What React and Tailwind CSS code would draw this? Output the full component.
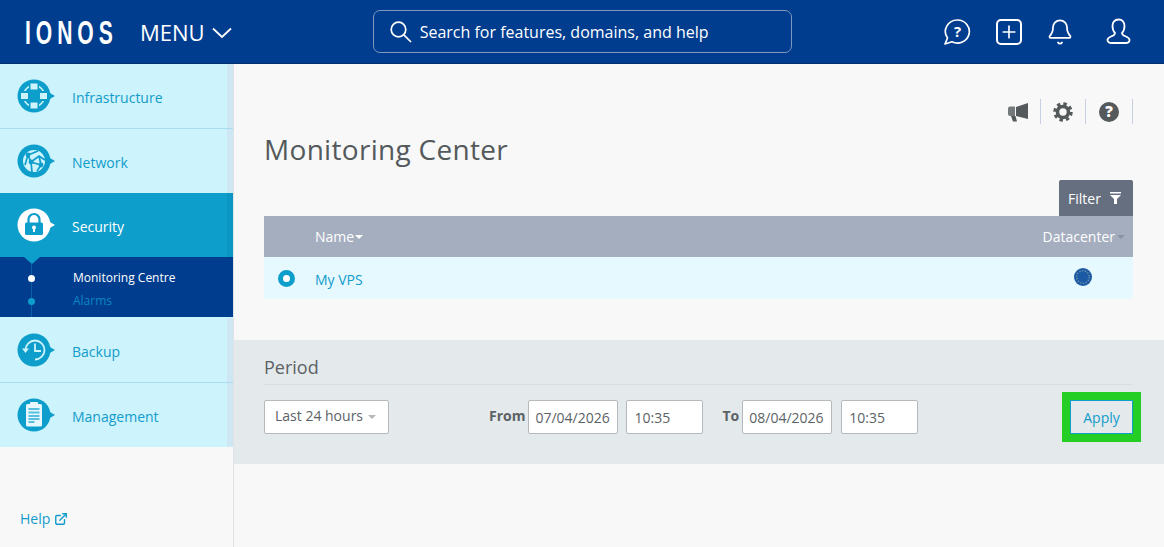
import React from "react";
import { Plus, Bell, ExternalLink } from "lucide-react";

const Bubble = ({ active, children }) => (
  <svg width="38" height="34" viewBox="0 0 38 34" className="shrink-0">
    <circle cx="17" cy="17" r="16.5" fill={active ? "#fff" : "#0d9ecb"} />
    <path d="M32 13.5 L38 17 L32 20.5 Z" fill={active ? "#fff" : "#0d9ecb"} />
    {children}
  </svg>
);

const InfraIcon = () => (
  <Bubble>
    <circle cx="17" cy="17" r="10.5" fill="none" stroke="#cdf3fc" strokeWidth="1.5" />
    <rect x="12" y="3.5" width="10" height="8" fill="#0d9ecb" />
    <rect x="12" y="22.5" width="10" height="8" fill="#0d9ecb" />
    <rect x="3.500" y="12" width="8" height="10" fill="#0d9ecb" />
    <rect x="22.500" y="12" width="8" height="10" fill="#0d9ecb" />
    <rect x="13.500" y="4.500" width="7" height="6" fill="#cdf3fc" />
    <rect x="13.500" y="23.500" width="7" height="6" fill="#cdf3fc" />
    <rect x="4" y="14" width="7" height="6" fill="#cdf3fc" />
    <rect x="23" y="14" width="7" height="6" fill="#cdf3fc" />
  </Bubble>
);

const NetworkIcon = () => (
  <Bubble>
    <circle cx="17" cy="17" r="11" fill="#cdf3fc" />
    <path d="M11 11 L14 18 L24 21 M14 18 L15 28 M11 11 L8 21 M11 11 L21 7 M14 18 L22 12 L28 16 M22 12 L24 21 L20 27" fill="none" stroke="#0d9ecb" strokeWidth="1.700" />
    <circle cx="11" cy="11" r="2.400" fill="#0d9ecb" />
    <circle cx="14" cy="18" r="2.400" fill="#0d9ecb" />
    <circle cx="24" cy="21" r="2.400" fill="#0d9ecb" />
  </Bubble>
);

const LockIcon = () => (
  <Bubble active>
    <path d="M11.500 15 V11.500 a5.500 5.500 0 0 1 11 0 V15" fill="none" stroke="#0d9ecb" strokeWidth="2.200" />
    <rect x="8" y="14.500" width="18" height="12.500" rx="1.500" fill="#0d9ecb" />
    <circle cx="17" cy="19.500" r="2" fill="#fff" />
    <rect x="16" y="20" width="2" height="4" fill="#fff" />
  </Bubble>
);

const BackupIcon = () => (
  <Bubble>
    <path d="M8.500 17 a9.500 9.500 0 1 1 9.500 9.500" fill="none" stroke="#cdf3fc" strokeWidth="1.800" />
    <path d="M5 15.500 h7 l-3.500 4.500 Z" fill="#cdf3fc" />
    <path d="M18 10.500 V18 H24" fill="none" stroke="#cdf3fc" strokeWidth="1.800" />
  </Bubble>
);

const ClipIcon = () => (
  <Bubble>
    <rect x="9" y="6" width="16" height="22.500" rx="1.500" fill="#e6f8fd" />
    <rect x="13" y="4" width="8" height="3.500" rx="1" fill="#e6f8fd" />
    <path d="M11.500 11 h11 M11.500 14.500 h11 M11.500 18 h11 M11.500 21 h11 M11.500 24 h6" stroke="#59bfdf" strokeWidth="1.800" />
  </Bubble>
);

const NavItem = ({ icon, label, border = true }) => (
  <div className={`relative bg-[#cdf3fc] flex items-center pl-[17px] ${border ? "h-[65px] border-b border-[#a9dcf3]" : "h-[64px]"}`}>
    <div className="absolute right-0 top-0 bottom-0 w-[6px] bg-[#cfe7f3]" />
    {icon}
    <span className="ml-[17px] mt-[2px] text-[14px] text-[#129ccb]">{label}</span>
  </div>
);

const Field = ({ children, w }) => (
  <div className={`h-[34px] ${w} bg-white border border-[#b5b9bc] rounded-[2px] flex items-center text-[14px] text-[#5b6266] shrink-0`}>
    {children}
  </div>
);

export default function App() {
  return (
    <div className="h-[547px] w-[1164px] overflow-hidden flex flex-col bg-[#f8f8f8] font-['Open_Sans',sans-serif]">
      <header className="h-[64px] bg-[#003d8f] flex items-center shrink-0 border-b border-[#02306f]">
        <span className="ml-[25px] w-[92px] mt-[1px] text-white text-[34px] leading-none font-bold font-['Liberation_Sans',sans-serif] tracking-[8px] origin-left scale-x-[0.62] whitespace-nowrap">IONOS</span>
        <span className="ml-[23px] text-white text-[22px] leading-none">MENU</span>
        <svg width="20" height="12" viewBox="0 0 20 12" fill="none" stroke="#fff" strokeWidth="1.800" className="ml-[7px] mt-[3px]">
          <path d="M1 1.500 L10 10 L19 1.500" />
        </svg>
        <div className="ml-[141px] w-[419px] h-[43px] rounded-[7px] border border-[#8097bd] flex items-center pl-[16px] text-white">
          <svg width="22" height="22" viewBox="0 0 22 22" fill="none" stroke="#fff" strokeWidth="1.700" className="shrink-0">
            <circle cx="8.500" cy="8.500" r="7.300" />
            <path d="M13.800 13.800 L21 21" />
          </svg>
          <span className="ml-[8px] text-[16px]">Search for features, domains, and help</span>
        </div>
        <div className="ml-[152px] flex items-center text-white">
          <svg width="28" height="28" viewBox="0 0 28 28" fill="none" stroke="#fff" strokeWidth="1.700" className="-ml-[1px]">
            <path d="M14.500 2 a12 11.500 0 1 1 -5.500 21.800 L2 26 L4.500 20 A12 11.500 0 0 1 14.500 2 Z" strokeLinejoin="round" />
            <text x="14.500" y="19" fontSize="15" fontWeight="700" fill="#fff" stroke="none" textAnchor="middle">?</text>
          </svg>
          <div className="ml-[25px] w-[26px] h-[26px] rounded-[5px] border-2 border-white flex items-center justify-center">
            <Plus size={20} strokeWidth={2} />
          </div>
          <Bell className="ml-[24px]" size={28} strokeWidth={1.500} />
          <svg className="ml-[32px]" width="25" height="27" viewBox="0 0 25 27" fill="none" stroke="#fff" strokeWidth="1.800">
            <path d="M12.500 1.500 c4 0 6 3 6 6.500 c0 3 -1 5.500 -2.500 7 c0 2 1 2.500 4 3.500 c2.500 1 3.500 2 3.500 3.500 c0 2 -2 3 -4 3 h-14 c-2 0 -4 -1 -4 -3 c0 -1.500 1 -2.500 3.500 -3.500 c3 -1 4 -1.500 4 -3.500 c-1.500 -1.500 -2.500 -4 -2.500 -7 c0 -3.500 2 -6.500 6 -6.500 Z" strokeLinejoin="round" />
          </svg>
        </div>
      </header>

      <div className="flex flex-1 min-h-0">
        <aside className="w-[234px] shrink-0 border-r border-[#dfe3e6] flex flex-col">
          <NavItem icon={<InfraIcon />} label="Infrastructure" />
          <NavItem icon={<NetworkIcon />} label="Network" border={false} />
          <div className="relative h-[64px] bg-[#0d9ecb] flex items-center pl-[17px]">
            <div className="absolute right-0 top-0 bottom-0 w-[6px] bg-[#0b96c4]" />
            <LockIcon />
            <span className="ml-[17px] mt-[2px] text-[14px] text-white">Security</span>
          </div>
          <div className="relative h-[60px] bg-[#003d8f] pl-[73px] border-b border-[#cdf3fc] box-content">
            <div className="absolute left-[31px] top-0 bottom-0 w-px bg-[#0a5fa5]" />
            <div className="absolute left-[24px] top-0 w-0 h-0 border-l-[8px] border-r-[8px] border-t-[7px] border-l-transparent border-r-transparent border-t-[#0d9ecb]" />
            <div className="absolute left-[28px] top-[18px] w-[7px] h-[7px] rounded-full bg-white" />
            <div className="absolute left-[28px] top-[41px] w-[7px] h-[7px] rounded-full bg-[#0d9ecb]" />
            <div className="pt-[12px] text-[12px] leading-[17px] text-white">Monitoring Centre</div>
            <div className="mt-[6px] text-[12px] leading-[17px] text-[#0b86c4]">Alarms</div>
          </div>
          <NavItem icon={<BackupIcon />} label="Backup" />
          <NavItem icon={<ClipIcon />} label="Management" border={false} />
          <div className="mt-[61px] ml-[20px] flex items-center text-[14px] text-[#129ccb]">
            Help
            <ExternalLink className="ml-[4px]" size={14} strokeWidth={2.400} />
          </div>
        </aside>

        <main className="flex-1 min-w-0">
          <div className="pl-[30px] pr-[31px]">
            <div className="h-[60px] flex justify-end items-start pt-[35px]">
              <div className="flex items-center h-[25px] text-[#54595c]">
                <svg width="22" height="20" viewBox="0 0 22 20" fill="#54595c" className="mr-[11px]">
                  <path d="M21 1 V17 L9 14 V5 Z" />
                  <path d="M1 6.500 a2 2 0 0 1 2 -2 H8 V14 H3 a2 2 0 0 1 -2 -2 Z" fill="#74797c" />
                  <path d="M4 14 H8.500 L10 19.500 H6 Z" />
                </svg>
                <div className="w-px h-[25px] bg-[#c6d0e0]" />
                <svg width="20" height="20" viewBox="0 0 20 20" className="mx-[12px]">
                  <circle cx="10" cy="10" r="5.500" fill="none" stroke="#54595c" strokeWidth="3.600" />
                  <circle cx="10" cy="10" r="8" fill="none" stroke="#54595c" strokeWidth="3.500" strokeDasharray="3.300 3" />
                </svg>
                <div className="w-px h-[25px] bg-[#c6d0e0]" />
                <div className="mx-[13px] w-[20px] h-[20px] rounded-full bg-[#54595c] flex items-center justify-center text-white text-[15px] font-extrabold leading-none">?</div>
                <div className="w-px h-[25px] bg-[#c6d0e0]" />
              </div>
            </div>
            <h1 className="mt-[6px] text-[28px] leading-[38px] text-[#54595c] tracking-[0.3px] font-normal">Monitoring Center</h1>
            <div className="mt-[12px] flex justify-end">
              <div className="w-[74px] h-[36px] bg-[#666f80] rounded-t-[2px] text-white text-[14px] flex items-center pl-[9px]">
                Filter
                <svg width="11" height="12" viewBox="0 0 11 12" className="ml-[9px]" fill="#fff">
                  <rect x="0" y="0" width="11" height="1.500" />
                  <path d="M0 3 H11 L7 7 V12 H4 V7 Z" />
                </svg>
              </div>
            </div>
            <div className="h-[41px] bg-[#a5aebf] flex items-center text-white text-[14px]">
              <span className="ml-[51px]">Name</span>
              <span className="ml-[1px] w-0 h-0 border-l-[4px] border-r-[4px] border-t-[4px] border-l-transparent border-r-transparent border-t-white" />
              <span className="ml-auto">Datacenter</span>
              <span className="ml-[2px] mr-[8px] w-0 h-0 border-l-[4px] border-r-[4px] border-t-[4px] border-l-transparent border-r-transparent border-t-[#8b93a3]" />
            </div>
            <div className="h-[42px] bg-[#e6f9ff] flex items-center">
              <div className="ml-[14px] w-[17px] h-[17px] rounded-full border-[5px] border-[#0d9ecb] bg-white" />
              <span className="ml-[20px] mt-[2px] text-[14px] text-[#129ccb]">My VPS</span>
              <svg width="18" height="18" viewBox="0 0 18 18" className="ml-auto mr-[41px] mb-[2px]">
                <circle cx="9" cy="9" r="9" fill="#1c5aa6" />
                <circle cx="9" cy="9" r="6.300" fill="none" stroke="#6f8fa0" strokeWidth="1.500" strokeDasharray="1.300 1.500" />
              </svg>
            </div>
          </div>

          <section className="mt-[41px] h-[124px] bg-[#e4e9ec] pl-[30px] pr-[31px]">
            <div className="h-[45px] border-b border-[#d7dde1] pt-[15px] text-[18px] leading-[25px] text-[#5b6266]">Period</div>
            <div className="mt-[15px] flex items-center">
              <Field w="w-[125px]">
                <span className="ml-[10px] mb-[4px]">Last 24 hours</span>
                <span className="ml-[5px] w-0 h-0 border-l-[4px] border-r-[4px] border-t-[4px] border-l-transparent border-r-transparent border-t-[#b5b9bc]" />
              </Field>
              <span className="ml-[100px] mr-[3px] mb-[3px] text-[14px] font-bold text-[#5b6266]">From</span>
              <Field w="w-[90px]"><span className="ml-[6px]">07/04/2026</span></Field>
              <div className="w-[8px]" />
              <Field w="w-[77px]"><span className="ml-[7px]">10:35</span></Field>
              <span className="ml-[19px] mr-[3px] mb-[3px] text-[14px] font-bold text-[#5b6266]">To</span>
              <Field w="w-[90px]"><span className="ml-[6px]">08/04/2026</span></Field>
              <div className="w-[9px]" />
              <Field w="w-[77px]"><span className="ml-[7px]">10:35</span></Field>
              <button className="relative ml-auto w-[63px] h-[34px] border border-[#0d9ecb] bg-[#e4e9ec] text-[14px] text-[#129ccb] flex items-center justify-center">
                Apply
                <span className="absolute -left-[9px] -right-[9px] -top-[9px] -bottom-[9px] border-[8px] border-[#24ce24]" />
              </button>
            </div>
          </section>
        </main>
      </div>
    </div>
  );
}
